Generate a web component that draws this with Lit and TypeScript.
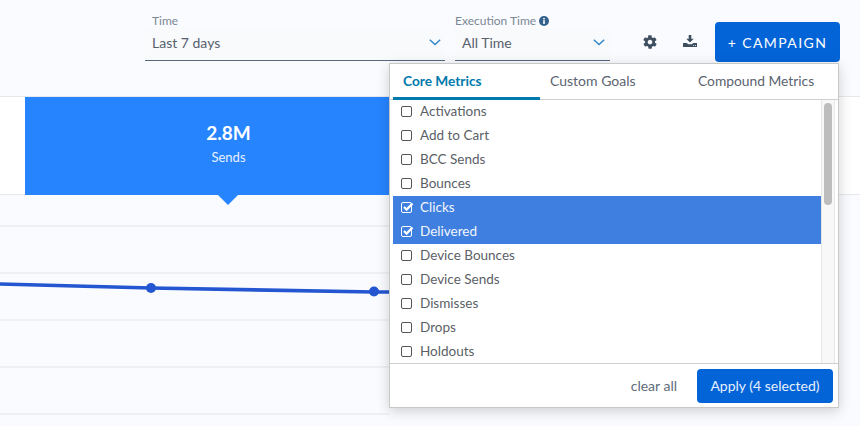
import { LitElement, html, css, svg } from "lit"
import { customElement } from "lit/decorators.js"

const metrics = [
  { name: "Activations" },
  { name: "Add to Cart" },
  { name: "BCC Sends" },
  { name: "Bounces" },
  { name: "Clicks", on: true },
  { name: "Delivered", on: true },
  { name: "Device Bounces" },
  { name: "Device Sends" },
  { name: "Dismisses" },
  { name: "Drops" },
  { name: "Holdouts" },
]

const chevron = html`<svg class="chev" width="12" height="7" viewBox="0 0 12 7"><path d="M.8.8L6 5.6 11.2.8" fill="none" stroke="#2f86c9" stroke-width="1.4"/></svg>`

@customElement("app-root")
export class AppRoot extends LitElement {
  static styles = css`
    :host {
      display: block;
      position: relative;
      width: 860px;
      height: 426px;
      overflow: hidden;
      background: #fafbff;
      font-family: "Lato", "Open Sans", sans-serif;
      color: #56606e;
    }

    .toolbar {
      height: 96px;
      box-sizing: border-box;
      display: flex;
      align-items: flex-start;
      justify-content: flex-end;
      padding: 15px 20px 0 0;
    }

    .field {
      display: flex;
      flex-direction: column;
      margin-right: 10px;
    }

    .field label {
      font-size: 12px;
      line-height: 12px;
      color: #7b8794;
      padding-left: 7px;
      display: flex;
      align-items: center;
      gap: 3px;
    }

    .select {
      box-sizing: border-box;
      height: 34px;
      padding: 0 4px 2px 7px;
      background: #f9fafb;
      border-bottom: 1px solid #546a7f;
      display: flex;
      align-items: center;
      justify-content: space-between;
      font-size: 14px;
      color: #56606e;
    }

    .time { width: 300px; }
    .exec { width: 155px; margin-right: 0; }
    .exec label { padding-left: 0; }
    .exec .select { padding-right: 5px; }

    .gear {
      width: 16px;
      height: 16px;
      margin: 19px 0 0 32px;
      flex: none;
    }

    .download {
      width: 14px;
      height: 12px;
      margin: 20px 0 0 25px;
      flex: none;
    }

    .campaign {
      width: 125px;
      height: 40px;
      margin-left: 18px;
      margin-top: 7px;
      border: 0;
      border-radius: 4px;
      background: #0364d8;
      color: #fff;
      font: inherit;
      font-size: 14px;
      letter-spacing: 1.4px;
      box-sizing: border-box;
      padding: 0;
    }

    .strip {
      height: 99px;
      box-sizing: border-box;
      background: #fff;
      border-top: 1px solid #e6e8ec;
      border-bottom: 1px solid #e6e8ec;
      padding-left: 25px;
      display: flex;
    }

    .tile {
      position: relative;
      width: 407px;
      height: 98px;
      background: #2684ff;
      color: #fff;
      display: flex;
      flex-direction: column;
      align-items: center;
      box-sizing: border-box;
    }

    .tile b {
      font-size: 19px;
      font-weight: 700;
      line-height: 24px;
      margin-top: 24px;
    }

    .tile span {
      font-size: 13px;
      line-height: 16px;
      margin-top: 4px;
      color: #e8f1ff;
    }

    .tile::after {
      content: "";
      position: absolute;
      left: 193px;
      bottom: -10px;
      border-left: 10px solid transparent;
      border-right: 10px solid transparent;
      border-top: 10px solid #2684ff;
    }

    .chart {
      display: block;
      position: absolute;
      left: 0;
      top: 195px;
    }

    .popover {
      position: absolute;
      left: 389px;
      top: 63px;
      width: 450px;
      height: 345px;
      box-sizing: border-box;
      background: #fff;
      border: 1px solid #c8c8c8;
      box-shadow: 0 3px 12px rgba(0, 0, 0, 0.18);
      display: flex;
      flex-direction: column;
    }

    .tabs {
      display: flex;
      height: 36px;
      flex: none;
      box-sizing: border-box;
      border-bottom: 1px solid #cfcfcf;
      padding: 0 3px;
      font-size: 14px;
      color: #5b6470;
    }

    .tab {
      width: 147px;
      padding-left: 10px;
      line-height: 33px;
      box-sizing: border-box;
    }

    .tab.sel {
      color: #0079ad;
      font-size: 13.7px;
      font-weight: 700;
      border-bottom: 3px solid #0079ad;
      height: 36px;
    }

    .tab.last {
      flex: 1;
      padding-left: 11px;
      font-size: 13.8px;
    }

    .body {
      flex: 1;
      min-height: 0;
      display: flex;
      padding: 0 3px;
    }

    .list {
      flex: 1;
      overflow: hidden;
    }

    .row {
      height: 24px;
      box-sizing: border-box;
      display: flex;
      align-items: center;
      padding: 0 0 2px 8px;
      font-size: 13.5px;
      color: #5b5f66;
      gap: 8px;
    }

    .row.on {
      background: #3f7fdf;
      color: #f2f6fd;
    }

    .box {
      box-sizing: border-box;
      width: 11px;
      height: 11px;
      margin-top: 1px;
      border: 1px solid #555;
      border-radius: 2px;
      background: #fff;
      flex: none;
      position: relative;
    }

    .row.on .box {
      border: 1.5px solid #fff;
      background: transparent;
    }

    .box svg {
      position: absolute;
      left: -1px;
      top: -2px;
    }

    .track {
      width: 14px;
      flex: none;
      box-sizing: border-box;
      background: #f8f8f8;
      border-left: 1px solid #e6e6e6;
      border-right: 1px solid #e6e6e6;
      padding: 3px 2px 0 2px;
    }

    .thumb {
      height: 102px;
      background: #bdbdbd;
      border-radius: 5px;
    }

    .foot {
      height: 44px;
      flex: none;
      box-sizing: border-box;
      border-top: 1px solid #cfcfcf;
      display: flex;
      align-items: center;
      justify-content: flex-end;
      padding: 0 5px 0 0;
      gap: 20px;
      font-size: 14px;
    }

    .clear { color: #5d6b7b; }

    .apply {
      width: 136px;
      height: 34px;
      border: 0;
      border-radius: 4px;
      background: #0364d8;
      color: #e7f0fc;
      font: inherit;
      font-size: 14px;
      padding: 0;
    }
  `

  chart() {
    const ys = [31, 78, 125, 172, 219]
    return html`<svg class="chart" width="860" height="231" viewBox="0 195 860 231">
      ${ys.map(y => svg`<line x1="0" x2="389" y1=${y + 195} y2=${y + 195} stroke="#eef0f4" stroke-width="2"/>`)}
      <path d="M0 284L151 288L374 292L389 292" fill="none" stroke="#2356d0" stroke-width="3.6"/>
      <circle cx="151" cy="288" r="5" fill="#2356d0"/>
      <circle cx="374" cy="291.5" r="5" fill="#2356d0"/>
    </svg>`
  }

  render() {
    return html`
      <div class="toolbar">
        <div class="field time">
          <label>Time</label>
          <div class="select">Last 7 days ${chevron}</div>
        </div>
        <div class="field exec">
          <label>Execution Time
            <svg width="10" height="10" viewBox="0 0 10 10"><circle cx="5" cy="5" r="5" fill="#33618c"/><rect x="4.2" y="4.2" width="1.6" height="3.8" fill="#fff"/><rect x="4.2" y="2" width="1.6" height="1.5" fill="#fff"/></svg>
          </label>
          <div class="select">All Time ${chevron}</div>
        </div>
        <svg class="gear" viewBox="0 0 24 24" fill="#3f4f60"><path d="M19.4 13c.1-.3.1-.7.1-1s0-.7-.1-1l2.1-1.6c.2-.2.2-.4.1-.6l-2-3.5c-.1-.2-.4-.3-.6-.2l-2.5 1c-.5-.4-1.1-.7-1.7-1l-.4-2.6c0-.3-.2-.5-.5-.5h-4c-.3 0-.5.2-.5.4l-.4 2.7c-.6.2-1.2.6-1.7 1l-2.5-1c-.2-.1-.5 0-.6.2l-2 3.5c-.1.2-.1.4.1.6L4.6 11c-.1.3-.1.7-.1 1s0 .7.1 1l-2.1 1.6c-.2.2-.2.4-.1.6l2 3.5c.1.2.4.3.6.2l2.5-1c.5.4 1.1.7 1.7 1l.4 2.6c0 .3.2.5.5.5h4c.3 0 .5-.2.5-.4l.4-2.7c.6-.2 1.2-.6 1.7-1l2.5 1c.2.1.5 0 .6-.2l2-3.5c.1-.2.1-.4-.1-.6L19.4 13zM12 15.5c-1.9 0-3.5-1.6-3.5-3.5s1.6-3.5 3.5-3.5 3.5 1.6 3.5 3.5-1.6 3.5-3.5 3.5z"/></svg>
        <svg class="download" viewBox="0 0 14 12" fill="#3f4f60"><path d="M5.7 0h2.6v3.8h2.4L7 7.6 3.3 3.8h2.4z"/><path d="M0 8h3.5L5.5 9.3h3l2-1.3H14v4H0z"/><rect x="10.3" y="10" width=".9" height=".9" fill="#fafbff"/><rect x="12" y="10" width=".9" height=".9" fill="#fafbff"/></svg>
        <button class="campaign">+ CAMPAIGN</button>
      </div>
      <div class="strip">
        <div class="tile"><b>2.8M</b><span>Sends</span></div>
      </div>
      ${this.chart()}
      <div class="popover">
        <div class="tabs">
          <div class="tab sel">Core Metrics</div>
          <div class="tab">Custom Goals</div>
          <div class="tab last">Compound Metrics</div>
        </div>
        <div class="body">
          <div class="list">
            ${metrics.map(m => html`
              <div class="row ${m.on ? "on" : ""}">
                <span class="box">${m.on ? html`<svg width="13" height="13" viewBox="0 0 13 13"><path d="M3 6l2.6 2.6L11.5 2.5" fill="none" stroke="#fff" stroke-width="2.2"/></svg>` : ""}</span>
                ${m.name}
              </div>`)}
          </div>
          <div class="track"><div class="thumb"></div></div>
        </div>
        <div class="foot">
          <span class="clear">clear all</span>
          <button class="apply">Apply (4 selected)</button>
        </div>
      </div>
    `
  }
}
